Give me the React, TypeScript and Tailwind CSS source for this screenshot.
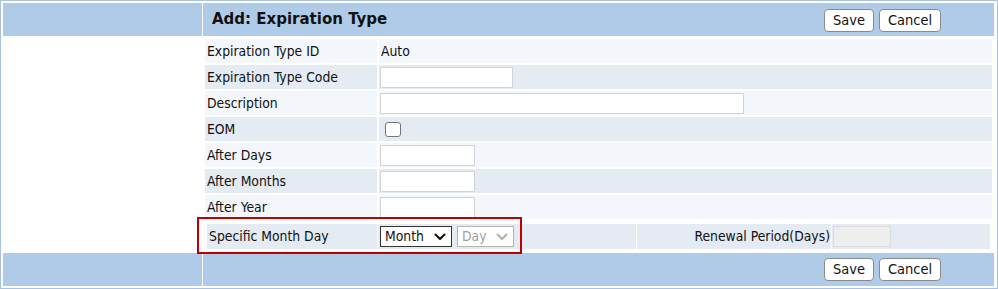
import React from 'react';

const font = "font-['DejaVu_Sans_Condensed','DejaVu_Sans',sans-serif]";

const Btn: React.FC<{ label: string; w: string }> = ({ label, w }) => (
  <button className={`${w} h-[23px] rounded-[4px] border border-[#8a8a8a] bg-white text-[14.5px] leading-none text-[#111]`}>
    {label}
  </button>
);

const TextBox: React.FC<{ w: string }> = ({ w }) => (
  <div className={`${w} h-[21px] border border-[#d3d3d3] bg-white`} />
);

const Chevron: React.FC<{ color: string }> = ({ color }) => (
  <svg width="12" height="8" viewBox="0 0 12 8" fill="none">
    <path d="M1.5 1.5 L6 6 L10.5 1.5" stroke={color} strokeWidth="2" strokeLinecap="round" strokeLinejoin="round" />
  </svg>
);

const rows: { label: string; kind: 'text' | 'input' | 'check'; w?: string; value?: string }[] = [
  { label: 'Expiration Type ID', kind: 'text', value: 'Auto' },
  { label: 'Expiration Type Code', kind: 'input', w: 'w-[133px]' },
  { label: 'Description', kind: 'input', w: 'w-[364px]' },
  { label: 'EOM', kind: 'check' },
  { label: 'After Days', kind: 'input', w: 'w-[95px]' },
  { label: 'After Months', kind: 'input', w: 'w-[95px]' },
  { label: 'After Year', kind: 'input', w: 'w-[95px]' },
];

export default function App() {
  return (
    <div className={`${font} relative w-[998px] h-[289px] bg-white border border-[#a8c2e2] p-[2px] text-[13.8px] text-[#111]`}>
      <div className="grid h-full grid-cols-[199px_1fr] grid-rows-[33px_1fr_33px] gap-x-px gap-y-px pr-[1px]">
        {/* header */}
        <div className="bg-[#b0cbe8]" />
        <div className="flex items-center justify-between bg-[#b0cbe8] pl-[9px] pr-[53px]">
          <h1 className="font-['DejaVu_Sans',sans-serif] text-[15px] font-bold text-[#111]">Add: Expiration Type</h1>
          <div className="flex gap-[5px] pt-[1px]">
            <Btn label="Save" w="w-[50px]" />
            <Btn label="Cancel" w="w-[62px]" />
          </div>
        </div>

        {/* body */}
        <div className="bg-white" />
        <div className="flex flex-col gap-[2px] p-[2px]">
          {rows.map((r, i) => (
            <div key={r.label} className="grid h-[24px] grid-cols-[172px_1fr] gap-x-[2px]">
              <div className={`flex items-center pl-[2px] ${i % 2 ? 'bg-[#e4ebf3]' : 'bg-[#f3f6fa]'}`}>{r.label}</div>
              <div className={`flex items-center pl-[1px] ${i % 2 ? 'bg-[#e4ebf3]' : 'bg-[#f3f6fa]'}`}>
                {r.kind === 'text' && <span className="pl-[1px]">{r.value}</span>}
                {r.kind === 'input' && <TextBox w={r.w!} />}
                {r.kind === 'check' && (
                  <div className="ml-[5px] h-[15px] w-[16px] rounded-[3px] border border-[#767676] bg-white" />
                )}
              </div>
            </div>
          ))}
          <div className="grid h-[25px] mt-[3px] mx-[2px] grid-cols-[170px_258px_194px_1fr] gap-x-px">
            <div className="flex items-center bg-[#e4ebf3] pl-[2px]">Specific Month Day</div>
            <div className="flex items-center gap-[5px] bg-[#e4ebf3] pl-[2px]">
              <div className="flex h-[21px] w-[72px] items-center justify-between border border-[#333] bg-white pl-[4px] pr-[5px] text-[#111]">
                Month
                <Chevron color="#111" />
              </div>
              <div className="flex h-[21px] w-[57px] items-center justify-between border border-[#b4b4b4] bg-white pl-[4px] pr-[5px] text-[#a0a0a0]">
                Day
                <Chevron color="#b0b0b0" />
              </div>
            </div>
            <div className="flex items-center justify-end bg-[#e4ebf3] pr-[1px]">Renewal Period(Days)</div>
            <div className="flex items-center bg-[#e4ebf3] pl-[1px]">
              <div className="h-[21px] w-[58px] border border-[#dcdcdc] bg-[#eeeeee]" />
            </div>
          </div>
        </div>

        {/* footer */}
        <div className="bg-[#b0cbe8]" />
        <div className="flex items-center justify-end bg-[#b0cbe8] pr-[53px]">
          <div className="flex gap-[5px]">
            <Btn label="Save" w="w-[50px]" />
            <Btn label="Cancel" w="w-[62px]" />
          </div>
        </div>
      </div>

      {/* annotation highlight */}
      <div className="pointer-events-none absolute left-[196px] top-[216px] h-[37px] w-[325px] border-2 border-[#c00000]" />
    </div>
  );
}
